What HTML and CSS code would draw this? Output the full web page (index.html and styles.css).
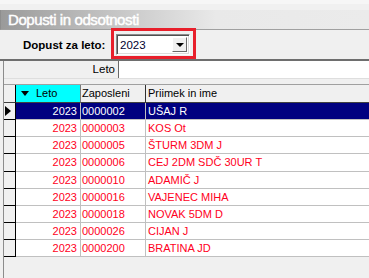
FILE: index.html
```html
<!DOCTYPE html>
<html lang="sl">
<head>
    <meta charset="UTF-8">
    <title>Dopusti in odsotnosti</title>
    <link rel="stylesheet" href="styles.css">
</head>
<body>
    <div class="window">
        <div class="top-strip"></div>

        <!-- Title bar -->
        <div class="titlebar">
            <span class="title">Dopusti in odsotnosti</span>
        </div>

        <!-- Year selector -->
        <div class="panel">
            <span class="panel-label">Dopust za leto:</span>
            <div class="combo">
                <span class="combo-value">2023</span>
                <span class="combo-btn"><span class="arrow-down"></span></span>
            </div>
        </div>
        <div class="highlight"></div>

        <div class="lower">
            <!-- Filter row -->
            <div class="filter">
                <span class="filter-label">Leto</span>
                <div class="filter-input"></div>
            </div>

            <!-- Grid -->
            <div class="grid">
                <div class="grid-head">
                    <div class="cell c-ind"></div>
                    <div class="cell c-year sorted"><span class="sort-arrow"></span>Leto</div>
                    <div class="cell c-emp">Zaposleni</div>
                    <div class="cell c-name">Priimek in ime</div>
                </div>
                <div class="row selected">
                    <div class="cell c-ind"><span class="pointer"></span></div>
                    <div class="cell c-year">2023</div>
                    <div class="cell c-emp">0000002</div>
                    <div class="cell c-name">UŠAJ R</div>
                </div>
                <div class="row">
                    <div class="cell c-ind"></div>
                    <div class="cell c-year">2023</div>
                    <div class="cell c-emp">0000003</div>
                    <div class="cell c-name">KOS Ot</div>
                </div>
                <div class="row">
                    <div class="cell c-ind"></div>
                    <div class="cell c-year">2023</div>
                    <div class="cell c-emp">0000005</div>
                    <div class="cell c-name">ŠTURM 3DM J</div>
                </div>
                <div class="row">
                    <div class="cell c-ind"></div>
                    <div class="cell c-year">2023</div>
                    <div class="cell c-emp">0000006</div>
                    <div class="cell c-name">CEJ 2DM SDČ 30UR T</div>
                </div>
                <div class="row">
                    <div class="cell c-ind"></div>
                    <div class="cell c-year">2023</div>
                    <div class="cell c-emp">0000010</div>
                    <div class="cell c-name">ADAMIČ J</div>
                </div>
                <div class="row">
                    <div class="cell c-ind"></div>
                    <div class="cell c-year">2023</div>
                    <div class="cell c-emp">0000016</div>
                    <div class="cell c-name">VAJENEC MIHA</div>
                </div>
                <div class="row">
                    <div class="cell c-ind"></div>
                    <div class="cell c-year">2023</div>
                    <div class="cell c-emp">0000018</div>
                    <div class="cell c-name">NOVAK 5DM D</div>
                </div>
                <div class="row">
                    <div class="cell c-ind"></div>
                    <div class="cell c-year">2023</div>
                    <div class="cell c-emp">0000026</div>
                    <div class="cell c-name">CIJAN J</div>
                </div>
                <div class="row">
                    <div class="cell c-ind"></div>
                    <div class="cell c-year">2023</div>
                    <div class="cell c-emp">0000200</div>
                    <div class="cell c-name">BRATINA JD</div>
                </div>
            </div>
        </div>
    </div>
</body>
</html>
```

FILE: styles.css
```css
/* Global */
body {
    margin: 0;
    background: #f0f0f0;
    font-family: "Liberation Sans", Arial, sans-serif;
    font-size: 11px;
    color: #000;
    overflow: hidden;
}

.window {
    position: relative;
    width: 369px;
    height: 278px;
    display: flex;
    flex-direction: column;
}

.top-strip {
    height: 4px;
    margin-bottom: 6px;
    background: #f6f6f6;
}

/* Title bar */
.titlebar {
    height: 19px;
    display: flex;
    align-items: center;
    padding-left: 8px;
    border-left: 1px solid #8e8e8e;
    border-bottom: 1px solid #a0a0a0;
    background: linear-gradient(to right, #9a9a9a 0, #c4c4c4 110px, #e9e9e9 215px, #ebebeb 100%);
}

.title {
    margin-left: -1px;
    color: #fff;
    font-size: 15px;
    letter-spacing: -0.4px;
    -webkit-text-stroke: 0.45px #fff;
}

/* Year selector panel */
.panel {
    height: 29px;
    display: flex;
    align-items: center;
    padding-left: 23px;
    border-bottom: 2px solid #6e6e6e;
}

.panel-label {
    width: 93px;
    font-size: 11.5px;
    font-weight: bold;
}

.combo {
    width: 74px;
    height: 21px;
    box-sizing: border-box;
    display: flex;
    align-items: center;
    justify-content: space-between;
    background: #fff;
    border-top: 1px solid #8a8a8a;
    border-left: 1px solid #8a8a8a;
    border-right: 1px solid #fff;
    border-bottom: 1px solid #fff;
    box-shadow: inset 1px 1px 0 #505050, inset -1px -1px 0 #dcdcdc;
    padding: 2px 2px 2px 3px;
}

.combo-value {
    font-size: 11.5px;
    color: #000030;
}

.combo-btn {
    width: 15px;
    height: 15px;
    box-sizing: border-box;
    display: flex;
    align-items: center;
    justify-content: center;
    background: #f0f0f0;
    border-top: 1px solid #fff;
    border-left: 1px solid #fff;
    border-right: 1px solid #6a6a6a;
    border-bottom: 1px solid #6a6a6a;
}

.arrow-down {
    width: 0;
    height: 0;
    border-left: 4px solid transparent;
    border-right: 4px solid transparent;
    border-top: 4px solid #000;
}

/* Red annotation frame */
.highlight {
    position: absolute;
    left: 111px;
    top: 28px;
    width: 85px;
    height: 31px;
    box-sizing: border-box;
    border: 3px solid #e81f2b;
}

/* Lower area with filter and grid */
.lower {
    flex: 1;
    margin-left: 3px;
    border-left: 1px solid #8c8c8c;
    display: flex;
    flex-direction: column;
}

.filter {
    height: 17px;
    display: flex;
    border-bottom: 1px solid #dedede;
}

.filter-label {
    width: 111px;
    text-align: right;
    line-height: 17px;
    font-size: 11.5px;
}

.filter-input {
    flex: 1;
    margin-left: 3px;
    background: #fff;
    border-left: 1px solid #6a6a6a;
}

.grid {
    margin-top: 5px;
    border-top: 1px solid #a0a0a0;
}

.grid-head,
.row {
    display: flex;
}

.cell {
    box-sizing: border-box;
    white-space: nowrap;
    overflow: hidden;
}

.grid-head .cell {
    height: 18px;
    line-height: 17px;
    background: #f0f0f0;
    border-bottom: 1px solid #404040;
}

.row .cell {
    height: 17.125px;
    line-height: 16px;
    background: #fff;
    color: #ff0022;
    border-bottom: 1px solid #c0c0c0;
}

.c-ind {
    width: 12px;
    border-right: 1px solid #000;
}

.c-year {
    width: 65px;
    text-align: right;
    padding-right: 3px;
    border-right: 1px solid #c0c0c0;
}

.c-emp {
    width: 65px;
    padding-left: 1px;
    border-right: 1px solid #c0c0c0;
}

.c-name {
    flex: 1;
    padding-left: 2px;
}

.grid-head .c-year {
    text-align: left;
    padding-left: 5px;
    border-right-color: #7a7a7a;
}

.grid-head .c-emp {
    border-right-color: #303030;
}

.grid-head .sorted {
    background: #00ffff;
}

.sort-arrow {
    display: inline-block;
    width: 0;
    height: 0;
    margin-right: 7px;
    vertical-align: 1px;
    border-left: 4.5px solid transparent;
    border-right: 4.5px solid transparent;
    border-top: 5px solid #000;
}

.row .c-ind {
    background: #f0f0f0;
    border-bottom-color: #000;
}

.row.selected .cell {
    background: #000080;
    color: #fff;
}

.row.selected .c-ind {
    background: #f0f0f0;
    display: flex;
    align-items: center;
    padding-left: 1px;
}

.pointer {
    width: 0;
    height: 0;
    border-top: 5px solid transparent;
    border-bottom: 5px solid transparent;
    border-left: 6px solid #000;
}
```
